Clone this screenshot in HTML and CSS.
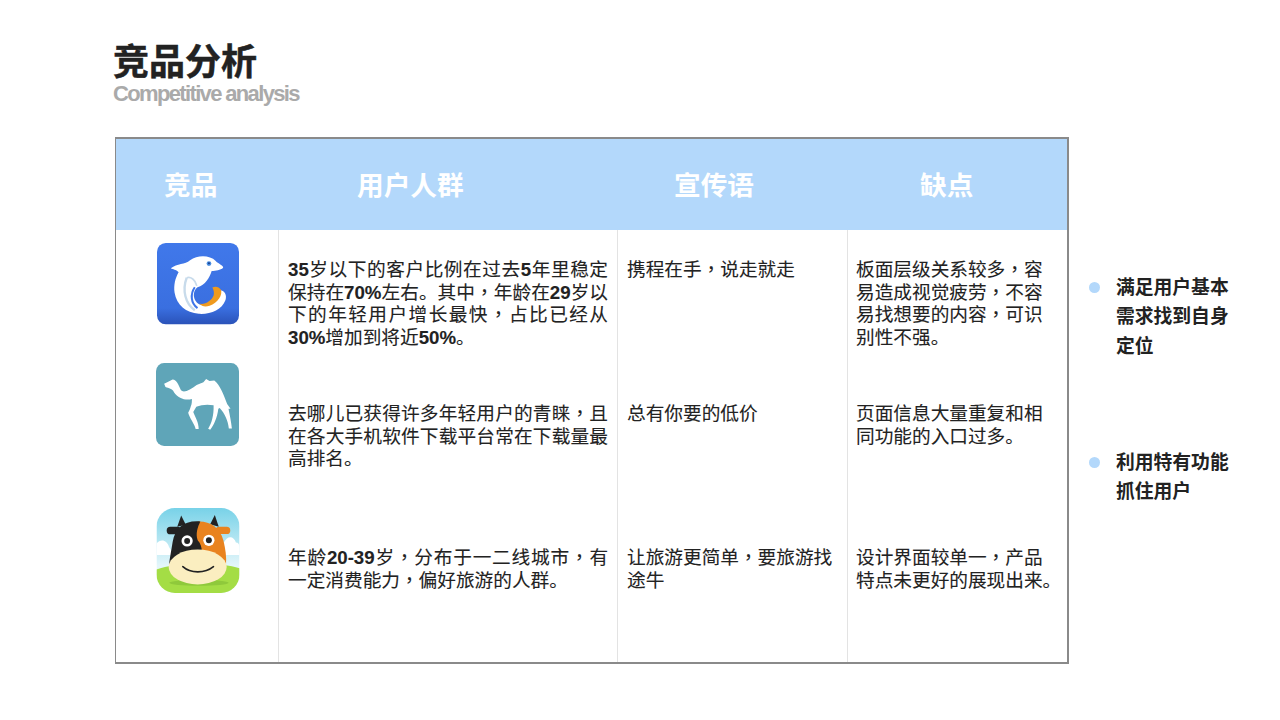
FILE: index.html
```html
<!DOCTYPE html>
<html lang="zh-CN">
<head>
<meta charset="utf-8">
<title>竞品分析</title>
<link rel="stylesheet" href="styles.css">
</head>
<body>
<div class="slide">
  <header class="heading">
    <h1>竞品分析</h1>
    <p class="sub">Competitive analysis</p>
  </header>
  <div class="main">
    <section class="table">
      <div class="thead">
        <div class="th th1">竞品</div>
        <div class="th th2">用户人群</div>
        <div class="th th3">宣传语</div>
        <div class="th th4">缺点</div>
      </div>
      <div class="tbody">
        <div class="col logos">
          <svg class="logo logo1" viewBox="52 25 243 243" aria-label="携程">
            <defs>
              <linearGradient id="blue" x1="0" y1="0" x2="0" y2="1"><stop offset="0" stop-color="#4078ea"/><stop offset=".8" stop-color="#3a6fe0"/><stop offset="1" stop-color="#2a52b8"/></linearGradient>
            </defs>
            <rect x="52" y="25" width="243" height="241" rx="26" fill="url(#blue)"/>
            <path fill="#fff" d="M93 100C112 84 135 90 150 76C172 60 208 60 226 78C232 86 249 90 248 98C240 106 226 106 214 108C208 128 195 150 172 156C160 166 158 182 166 196C176 214 205 214 222 196C230 186 236 172 238 164C252 166 260 178 255 194C244 224 210 237 176 235C138 232 110 210 104 172C101 150 106 130 116 112C108 103 100 104 93 100Z"/>
            <path fill="none" stroke="#c8dbeb" stroke-width="7" d="M140 128C126 165 136 205 164 224"/>
            <path fill="none" stroke="#c8dbeb" stroke-width="5" d="M140 128C152 124 166 134 170 152"/>
            <path fill="none" stroke="#3f76e8" stroke-width="6" d="M164 156C150 176 152 204 172 218"/>
            <path fill="#ef9a1e" d="M216 157C224 152 236 154 241 163C248 178 232 203 208 211C194 216 184 212 178 205C196 208 214 196 220 180C222 172 220 164 216 157Z"/>
            <circle cx="206" cy="86" r="7" fill="#4a8de0"/>
            <circle cx="206" cy="85" r="3" fill="#17408f"/>
          </svg>
          <svg class="logo logo2" viewBox="52 25 245 245" aria-label="去哪儿">
            <rect x="52" y="25" width="245" height="245" rx="24" fill="#5fa5b8"/>
            <path fill="#fff" d="M76 86L88 80L101 74C113 74 118 90 125 104C133 116 153 104 172 90L192 82L200 72L210 78L224 77C240 88 252 120 262 146L272 160L266 160C270 180 274 200 276 218L267 218C264 194 256 176 240 158L236 160C233 186 222 210 212 222L206 219C216 204 223 180 222 150C205 146 186 148 171 154L162 170C168 186 178 200 178 220L169 220C166 205 150 186 147 172C150 166 153 160 155 152C158 146 158 138 158 131C140 136 118 130 105 111C100 100 90 100 80 96Z"/>
          </svg>
          <svg class="logo logo3" viewBox="47 27 252 258" aria-label="途牛">
            <defs>
              <linearGradient id="sky" x1="0" y1="0" x2="0" y2="1"><stop offset="0" stop-color="#78d2e8"/><stop offset=".68" stop-color="#e4f6fa"/></linearGradient>
              <clipPath id="squircle"><rect x="47" y="27" width="252" height="258" rx="56"/></clipPath>
            </defs>
            <g clip-path="url(#squircle)">
              <rect x="47" y="27" width="252" height="258" fill="url(#sky)"/>
              <path fill="#fff" d="M47 170V135C60 118 80 125 85 145L100 170ZM250 135C262 108 282 112 288 132C295 132 299 138 299 146V170H250Z"/>
              <path fill="#a4dd45" d="M47 214C100 192 240 190 299 210V285H47Z"/>
              <ellipse cx="176" cy="254" rx="90" ry="9" fill="#8fc93b"/>
            </g>
            <path fill="#222" d="M110 84L122 50L136 78Z"/>
            <path fill="#222" d="M210 76L224 48L236 84Z"/>
            <rect x="78" y="84" width="44" height="23" rx="11" fill="#222"/>
            <rect x="226" y="84" width="45" height="22" rx="11" fill="#e9831f"/>
            <path fill="#e9831f" d="M172 68C208 66 238 84 250 125C256 150 260 175 258 200H150Z"/>
            <path fill="#222" d="M180 68C130 64 104 88 96 130C92 155 87 180 85 200H160C190 175 190 145 172 125C165 105 172 85 180 68Z"/>
            <ellipse cx="172" cy="206" rx="88" ry="53" fill="#fbeec0"/>
            <path d="M127 205C150 226 194 226 220 205" fill="none" stroke="#222" stroke-width="5" stroke-linecap="round"/>
            <circle cx="140" cy="127" r="17" fill="#fff"/><circle cx="140" cy="127" r="9" fill="#222"/>
            <circle cx="206" cy="125" r="17" fill="#fff"/><circle cx="206" cy="125" r="9" fill="#222"/>
          </svg>
        </div>
        <div class="col">
          <p class="cell wide"><b>35</b>岁以下的客户比例在过去<b>5</b>年里稳定保持在<b>70%</b>左右。其中<span class="pc" lang="zh-Hant">，</span>年龄在<b>29</b>岁以下的年轻用户增长最快<span class="pc" lang="zh-Hant">，</span>占比已经从<b>30%</b>增加到将近<b>50%</b>。</p>
          <p class="cell wide">去哪儿已获得许多年轻用户的青睐<span class="pc" lang="zh-Hant">，</span>且在各大手机软件下载平台常在下载量最高排名。</p>
          <p class="cell wide">年龄<b>20-39</b>岁<span class="pc" lang="zh-Hant">，</span>分布于一二线城市<span class="pc" lang="zh-Hant">，</span>有一定消费能力<span class="pc" lang="zh-Hant">，</span>偏好旅游的人群。</p>
        </div>
        <div class="col">
          <p class="cell">携程在手<span class="pc" lang="zh-Hant">，</span>说走就走</p>
          <p class="cell">总有你要的低价</p>
          <p class="cell">让旅游更简单<span class="pc" lang="zh-Hant">，</span>要旅游找<br>途牛</p>
        </div>
        <div class="col col4">
          <p class="cell">板面层级关系较多<span class="pc" lang="zh-Hant">，</span>容<br>易造成视觉疲劳<span class="pc" lang="zh-Hant">，</span>不容<br>易找想要的内容<span class="pc" lang="zh-Hant">，</span>可识<br>别性不强。</p>
          <p class="cell">页面信息大量重复和相<br>同功能的入口过多。</p>
          <p class="cell">设计界面较单一<span class="pc" lang="zh-Hant">，</span>产品<br>特点未更好的展现出来。</p>
        </div>
      </div>
    </section>
    <aside class="notes">
      <div class="note"><span class="dot"></span><p>满足用户基本<br>需求找到自身<br>定位</p></div>
      <div class="note"><span class="dot"></span><p>利用特有功能<br>抓住用户</p></div>
    </aside>
  </div>
</div>
</body>
</html>
```
FILE: styles.css
```css
* { box-sizing: border-box; }
html, body { margin: 0; padding: 0; background: #fff; }
body {
  font-family: "Liberation Sans", "Noto Sans CJK SC", sans-serif;
  color: #222;
}
.slide {
  width: 1280px;
  height: 720px;
  padding: 40px 0 0 113px;
  overflow: hidden;
}
.heading {
  height: 97px;
  padding-top: 2px;
}
h1 {
  margin: 0;
  font-size: 36px;
  line-height: 41px;
  font-weight: 700;
  color: #222;
  -webkit-text-stroke: 0.5px #222;
}
.sub {
  margin: 0;
  font-size: 22px;
  line-height: 22px;
  font-weight: 700;
  color: #aaa;
  letter-spacing: -1.65px;
}
.main {
  display: flex;
  margin-left: 2px;
}
.table {
  width: 954px;
  height: 527px;
  border: 2px solid #8a8a8a;
  border-left-width: 1px;
  flex: none;
}
.thead, .tbody {
  display: grid;
  grid-template-columns: 162px 339px 230px 1fr;
}
.thead {
  height: 91px;
  background: #b3d8fb;
}
.th {
  font-size: 26.67px;
  line-height: 91px;
  font-weight: 700;
  color: #fff;
  margin-top: 2px;
}
.th1 { padding-left: 48px; }
.th2 { padding-left: 79px; }
.th3 { padding-left: 57px; }
.th4 { padding-left: 73px; }
.tbody { height: 432px; }
.col {
  border-left: 1px solid #e3e3e3;
  padding: 29px 0 0 9px;
}
.col4 { padding-left: 8px; }
.logos {
  border-left: 0;
  padding: 13px 0 0 1px;
  display: flex;
  flex-direction: column;
  align-items: center;
}
.logo { display: block; flex: none; }
.logo1 { width: 82px; height: 82px; }
.logo2 { width: 83px; height: 83px; margin-top: 38px; }
.logo3 { width: 84px; height: 85px; margin-top: 62px; }
.cell {
  margin: 0;
  height: 144px;
  font-size: 18.67px;
  line-height: 22.7px;
  white-space: nowrap;
  color: #222;
  -webkit-text-stroke: 0.1px #222;
}
.cell:last-child { height: auto; }
.wide {
  width: 320px;
  white-space: normal;
  text-align: justify;
}
.cell b { font-weight: 700; }
.pc { font-family: "Noto Sans CJK TC", sans-serif; line-height: 0; }
.notes {
  padding: 136px 0 0 20px;
}
.note {
  display: flex;
  gap: 16px;
  height: 175px;
}
.dot {
  flex: none;
  width: 11px;
  height: 11px;
  margin-top: 9px;
  border-radius: 50%;
  background: #b3d8fb;
}
.note p {
  margin: 0;
  font-size: 18.8px;
  line-height: 29.3px;
  font-weight: 700;
  white-space: nowrap;
}
```
